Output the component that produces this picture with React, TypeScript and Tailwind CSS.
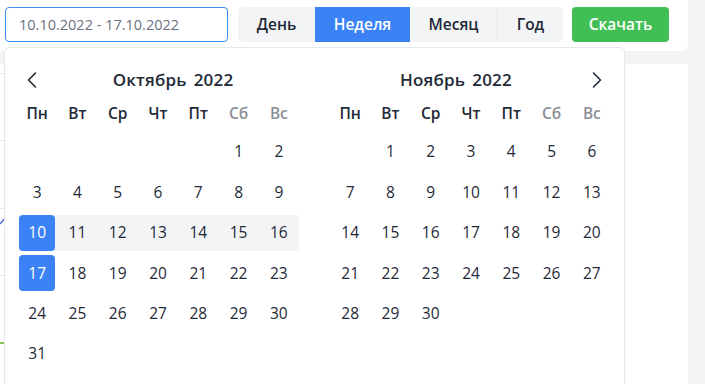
import React from 'react'

const WEEKDAYS = ['Пн', 'Вт', 'Ср', 'Чт', 'Пт', 'Сб', 'Вс']

type MonthProps = {
  title: string
  year: number
  offset: number // empty cells before day 1
  days: number
  side: 'left' | 'right'
  rangeStart?: number
  rangeEnd?: number
  selected?: number[]
}

function Chevron({ dir }: { dir: 'left' | 'right' }) {
  return (
    <svg width="10" height="16" viewBox="0 0 10 16" fill="none" className="text-[#1f2937]">
      <path
        d={dir === 'left' ? 'M8.5 1 L1.5 8 L8.5 15' : 'M1.5 1 L8.5 8 L1.5 15'}
        stroke="currentColor"
        strokeWidth="1.6"
        strokeLinecap="round"
        strokeLinejoin="round"
      />
    </svg>
  )
}

function Month({ title, year, offset, days, side, rangeStart, rangeEnd, selected = [] }: MonthProps) {
  const cells: (number | null)[] = [
    ...Array.from({ length: offset }, () => null),
    ...Array.from({ length: days }, (_, i) => i + 1),
  ]

  return (
    <div className="w-[282px] flex flex-col">
      {/* Month header */}
      <div className="flex items-center h-[24px]">
        {side === 'left' && (
          <button className="w-[30px] flex items-center justify-center">
            <Chevron dir="left" />
          </button>
        )}
        <div className="flex-1 text-center text-[17px] font-semibold text-[#1f2937] tracking-[0.2px]">
          {title}
          <span className="ml-[7px]">{year}</span>
        </div>
        {side === 'right' && (
          <button className="w-[30px] flex items-center justify-center">
            <Chevron dir="right" />
          </button>
        )}
      </div>

      {/* Weekday names */}
      <div className="grid grid-cols-7 mt-[10px] h-[24px] items-center">
        {WEEKDAYS.map((d, i) => (
          <div
            key={d}
            className={`text-center text-[15.5px] font-semibold ${i >= 5 ? 'text-[#8b8f96]' : 'text-[#1f2937]'}`}
          >
            {d}
          </div>
        ))}
      </div>

      {/* Days */}
      <div className="grid grid-cols-7 gap-y-[4.4px] mt-[8px]">
        {cells.map((n, i) => {
          if (n === null) return <div key={`e-${i}`} className="h-[36px]" />
          const isSel = selected.includes(n)
          const inRange =
            rangeStart !== undefined && rangeEnd !== undefined && n > rangeStart && n <= rangeEnd
          const isStart = n === rangeStart
          return (
            <div
              key={n}
              className={`h-[36px] flex items-center justify-center ${inRange ? 'bg-[#f3f4f6]' : ''} ${
                isStart ? 'bg-[linear-gradient(to_right,transparent_50%,#f3f4f6_50%)]' : ''
              }`}
            >
              {isSel ? (
                <div className="w-[36px] h-[36px] rounded-[4px] bg-[#3b82f6] text-white flex items-center justify-center text-[15.5px]">
                  {n}
                </div>
              ) : (
                <span className="text-[15.5px] text-[#1f2937]">{n}</span>
              )}
            </div>
          )
        })}
      </div>
    </div>
  )
}

export default function App() {
  return (
    <div
      className="relative w-[705px] h-[384px] overflow-hidden bg-[#f3f4f6] flex flex-col gap-[13px]"
      style={{ fontFamily: '"Open Sans", "Noto Sans", sans-serif' }}
    >
      {/* Toolbar card */}
      <div className="w-[688px] h-[51px] bg-white rounded-br-lg flex items-start pt-[7px] pl-[5px]">
        <div className="w-[223px] h-[35px] border border-[#3b8ef3] rounded-[4px] flex items-center px-[13px] text-[14.5px] text-[#6b7280]">
          10.10.2022 - 17.10.2022
        </div>

        <div className="ml-[10px] h-[35px] flex rounded-[5px] bg-[#f3f4f6] overflow-hidden text-[15.5px] font-semibold text-[#1f2937]">
          <button className="w-[77px] flex items-center justify-center">День</button>
          <button className="w-[95px] flex items-center justify-center bg-[#3b82f6] text-white">Неделя</button>
          <button className="w-[88px] flex items-center justify-center border-r border-[#e5e7eb]">Месяц</button>
          <button className="w-[65px] flex items-center justify-center">Год</button>
        </div>

        <button className="ml-[9px] w-[97px] h-[35px] rounded-[4px] bg-[#41bf55] text-white text-[15.5px] font-semibold flex items-center justify-center">
          Скачать
        </button>
      </div>

      {/* Chart card (mostly hidden behind the picker) */}
      <div className="relative w-[688px] flex-1 bg-white">
        <svg width="60" height="320" className="absolute left-0 top-0">
          {[9, 76, 144, 211].map((y) => (
            <line key={y} x1="0" y1={y + 0.5} x2="20" y2={y + 0.5} stroke="#e5e7eb" strokeWidth="1" />
          ))}
          <polyline points="0,160 6,153 40,140" fill="none" stroke="#5b6fd6" strokeWidth="1.5" />
          <line x1="0" y1="279" x2="60" y2="279" stroke="#8bc34a" strokeWidth="2" />
        </svg>
      </div>

      {/* Date range picker popover */}
      <div className="absolute left-[4px] top-[47px] w-[621px] h-[360px] bg-white border border-[#e5e7eb] rounded-md pt-[20px] pl-[12px] flex gap-[31px]">
        <Month
          title="Октябрь"
          year={2022}
          offset={5}
          days={31}
          side="left"
          rangeStart={10}
          rangeEnd={16}
          selected={[10, 17]}
        />
        <Month title="Ноябрь" year={2022} offset={1} days={30} side="right" />
      </div>
    </div>
  )
}
